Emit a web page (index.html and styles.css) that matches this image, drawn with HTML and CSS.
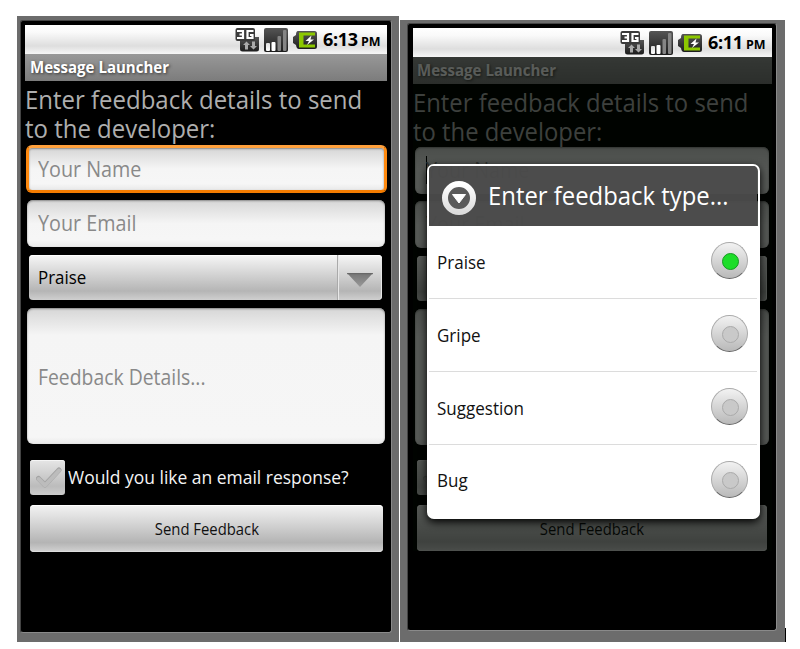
FILE: index.html
```html
<!DOCTYPE html>
<html lang="en">
<head>
<meta charset="utf-8">
<title>Message Launcher</title>
<link rel="stylesheet" href="styles.css">
</head>
<body>
<svg width="0" height="0" class="defs" aria-hidden="true">
  <defs>
    <linearGradient id="dark" x1="0" y1="0" x2="0" y2="1"><stop offset="0" stop-color="#555"/><stop offset="1" stop-color="#1c1c1c"/></linearGradient>
    <linearGradient id="bar" x1="0" y1="0" x2="0" y2="1"><stop offset="0" stop-color="#ddd"/><stop offset="1" stop-color="#fff"/></linearGradient>
    <linearGradient id="arrow" x1="0" y1="0" x2="0" y2="1"><stop offset="0" stop-color="#757575"/><stop offset="1" stop-color="#999"/></linearGradient>
    <linearGradient id="ring" x1="0" y1="0" x2="0" y2="1"><stop offset="0" stop-color="#fff"/><stop offset="1" stop-color="#dcdcdc"/></linearGradient>
    <symbol id="status-icons" viewBox="0 0 82 26">
      <path d="M5 10H24V22Q24 24.500 21.500 24.500H7.500Q5 24.500 5 22Z" fill="url(#dark)"/>
      <rect x=".5" y="1" width="19.500" height="13" rx="2" fill="#3b3b3b"/>
      <path d="M2 4H8V11H2M4.500 7.500H8M18.500 4H12.500V11H17.500V8H15" fill="none" stroke="#fff" stroke-width="2.200"/>
      <path d="M11.500 14.500L15 18H13V22.500H10V18H8ZM18.500 22.500L15 19H17V14.500H20V19H22Z" fill="#aaa"/>
      <rect x="29" y="1" width="24" height="24" rx="2" fill="url(#dark)"/>
      <rect x="31" y="16" width="4" height="8" rx="1" fill="url(#bar)"/>
      <rect x="36.500" y="15" width="4" height="9" rx="1" fill="#fff"/>
      <rect x="42.500" y="9" width="3.500" height="15" rx="1" fill="#858585"/>
      <rect x="48" y="3" width="3.500" height="21" rx="1" fill="#858585"/>
      <path d="M62 4H79.500Q82 4 82 6.500V19.500Q82 22 79.500 22H64Q61.500 22 61 18L58 16V10L61 8Q61 4 63 4Z" fill="url(#dark)"/>
      <path d="M64 5.500H80V8.500H68.500V17.500H80V20.500H64Z" fill="#8cc800"/>
      <path d="M76.500 8.500L70.500 14H74L72 18L79 12.500H75.500Z" fill="#fff"/>
    </symbol>
    <symbol id="check" viewBox="0 0 26 22">
      <path d="M2.500 11.500L9 18L23 3" fill="none" stroke="#a2a2a2" stroke-width="5" stroke-linecap="round" stroke-linejoin="round"/>
      <path d="M2.700 12L9 18.300L23 3.500" fill="none" stroke="#bcbcbc" stroke-width="4" stroke-linecap="round" stroke-linejoin="round"/>
    </symbol>
  </defs>
</svg>
<main class="board">
  <section class="phone phone-form">
    <div class="screen">
      <header class="status"><svg class="status-icons"><use href="#status-icons"/></svg><span class="clock">6:13</span><span class="pm">PM</span></header>
      <div class="titlebar"><span>Message Launcher</span></div>
      <div class="form">
        <div class="intro"><div>Enter feedback details to send</div><div>to the developer:</div></div>
        <div class="field name focused"><span>Your Name</span></div>
        <div class="field email"><span>Your Email</span></div>
        <div class="spinner"><span class="value">Praise</span><span class="drop"><svg viewBox="0 0 26 14"><path d="M0 0H26L13 14Z" fill="url(#arrow)"/><path d="M0 .7H26" stroke="#666"/></svg></span></div>
        <div class="field details"><span>Feedback Details...</span></div>
        <div class="option"><span class="checkbox"><svg><use href="#check"/></svg></span><span class="question">Would you like an email response?</span></div>
        <div class="button"><span>Send Feedback</span></div>
      </div>
    </div>
  </section>
  <section class="phone phone-dialog">
    <div class="screen">
      <header class="status"><svg class="status-icons"><use href="#status-icons"/></svg><span class="clock">6:11</span><span class="pm">PM</span></header>
      <div class="covered">
        <div class="titlebar"><span>Message Launcher</span></div>
        <div class="form">
          <div class="intro"><div>Enter feedback details to send</div><div>to the developer:</div></div>
          <div class="field name caret"><span>Your Name</span></div>
          <div class="field email"><span>Your Email</span></div>
          <div class="spinner"><span class="drop"></span></div>
          <div class="field details"></div>
          <div class="option"><span class="checkbox"><svg><use href="#check"/></svg></span></div>
          <div class="button"><span>Send Feedback</span></div>
        </div>
      </div>
      <div class="dialog">
        <div class="dialog-head">
          <svg class="head-icon" viewBox="0 0 36 36"><circle cx="18" cy="18" r="14" fill="#5a5a5a" stroke="url(#ring)" stroke-width="6"/><path d="M11.500 14.500H24.500L18 23Z" fill="#fff" stroke="#fff" stroke-linejoin="round"/></svg>
          <span class="dialog-title">Enter feedback type...</span>
        </div>
        <div class="choice"><span>Praise</span><i class="radio on"></i></div>
        <div class="choice"><span>Gripe</span><i class="radio"></i></div>
        <div class="choice"><span>Suggestion</span><i class="radio"></i></div>
        <div class="choice"><span>Bug</span><i class="radio"></i></div>
      </div>
    </div>
  </section>
  <i class="tick"></i>
</main>
</body>
</html>
```
FILE: styles.css
```css
* { box-sizing: border-box; }
body { margin: 0; background: #fff; font-family: "Open Sans", "Noto Sans", sans-serif; }
.defs { position: absolute; }
.board { display: flex; align-items: flex-end; width: 800px; height: 642px; padding-left: 17px; }
.phone { background: #6c6c6c; white-space: nowrap; }
.phone-form { width: 382px; height: 626px; padding: 4px 7px 9px 3px; }
.phone-dialog { width: 385px; height: 622px; margin-left: 1px; padding: 3px 8px 11px 7px; }
.tick { width: 1px; height: 14px; background: #000; }
.screen { position: relative; height: 100%; background: #000; border: 1px solid #444; border-right-color: #8a8a8a; border-bottom-color: #8a8a8a; border-radius: 3px; padding: 4px 4px 0 4px; }
.phone-dialog .screen { padding-left: 5px; }

/* Slightly condensed lettering throughout */
.titlebar span, .intro div, .field span, .value, .question, .button span, .dialog-title, .choice span { display: inline-block; transform: scaleX(.94); transform-origin: left center; }

.status { display: flex; align-items: center; justify-content: flex-end; height: 29px; padding-right: 7px; background: linear-gradient(#fff 0, #fafafa 25%, #dedede 72%, #f6f6f6 100%); color: #000; font-weight: 700; line-height: 28px; }
.status-icons { width: 82px; height: 26px; margin-right: 6px; }
.clock { font-size: 18px; width: 34px; letter-spacing: -.3px; margin-top: -1px; }
.pm { font-size: 12.500px; width: 19px; margin-left: 4px; padding-top: 4px; }
.titlebar { height: 27px; padding-left: 5px; background: linear-gradient(#989898, #7c7c7c); color: #fff; font-size: 16px; font-weight: 700; line-height: 26px; text-shadow: 1px 1px 3px #333; }

.intro { height: 64px; padding: 4px 0 0 0; color: #aeaeae; font-size: 25.500px; line-height: 28.500px; }
.intro div { display: block; transform: scaleX(.94); }
.field { border-radius: 6px; background: linear-gradient(#d6d6d6, #f5f5f5 50%, #f6f6f6 85%, #e9e9e9); box-shadow: inset 0 1px 2px #888; color: #898989; font-size: 21px; padding-left: 11px; margin: 0 2px; }
.name { height: 48px; line-height: 47px; }
.name.focused { border: 3px solid #ff8a10; border-top-color: #ffa03c; border-bottom-color: #f57c00; margin: 0 0 0 1px; padding-left: 9px; line-height: 42px; }
.email { height: 47px; line-height: 46px; margin-top: 7px; }
.spinner { display: flex; justify-content: space-between; height: 45px; margin: 8px 5px 0 4px; border-radius: 4px; background: linear-gradient(#f6f6f6, #dedede 30%, #b5b5b5 80%, #cfcfcf); box-shadow: inset 0 1px #fff, inset -1px 0 #e5e5e5; color: #000; font-size: 18px; line-height: 45px; padding-left: 9px; }
.drop { width: 45px; border-left: 1px solid #aaa; box-shadow: inset 1px 0 #e8e8e8; padding: 18px 0 0 9px; }
.drop svg { display: block; width: 26px; height: 14px; }
.details { display: flex; align-items: center; height: 136px; margin-top: 8px; padding-top: 2px; background: linear-gradient(#d6d6d6, #f5f5f5 20%, #f6f6f6 95%, #e9e9e9); }
.details span { transform: scaleX(.922); }
.option { display: flex; align-items: center; height: 35px; margin: 16px 0 0 5px; color: #f4f4f4; font-size: 18.500px; line-height: 33px; }
.checkbox { display: flex; align-items: center; justify-content: center; width: 35px; height: 35px; margin-right: 3px; border-radius: 3px; background: linear-gradient(#e6e6e6, #bcbcbc 75%, #ccc); box-shadow: inset 0 1px #f5f5f5; }
.checkbox svg { width: 26px; height: 22px; margin-left: 2px; }
.question { margin-top: -2px; transform: scaleX(.944); }
.button { height: 47px; margin: 10px 4px 0 5px; border-radius: 4px; background: linear-gradient(#f3f3f3, #d8d8d8 35%, #b4b4b4 80%, #d2d2d2); box-shadow: inset 0 1px #fff, inset 0 -1px #ddd; color: #111; font-size: 16.500px; line-height: 48px; text-align: center; }
.button span { transform: scaleX(.9); transform-origin: center; }

.covered { position: relative; }
.covered::after { content: ""; position: absolute; inset: 0; background: rgba(0, 4, 0, .65); }
.phone-dialog .titlebar { padding-left: 4px; }
.phone-dialog .intro { height: 63px; }
.phone-dialog .intro div { transform: scaleX(.935); }
.phone-dialog .field { margin-right: 3px; }
.phone-dialog .name { height: 47px; }
.caret { position: relative; }
.caret::before { content: ""; position: absolute; left: 11px; top: 9px; width: 1px; height: 28px; background: #000; }
.phone-dialog .option { margin: 15px 0 0 4px; }
.phone-dialog .button { height: 46px; line-height: 47px; margin: 10px 5px 0 4px; }

.dialog { position: absolute; left: 19px; top: 140px; width: 333px; height: 355px; border: 2px solid #fff; border-radius: 7px; background: linear-gradient(transparent 60px, #fff 60px); box-shadow: 0 3px 8px #000; padding-right: 1px; }
.dialog-head { display: flex; align-items: center; height: 60px; padding-left: 12px; background: rgba(76, 76, 76, .95); color: #fff; font-size: 26px; border-radius: 4px 4px 0 0; }
.head-icon { width: 36px; height: 36px; margin: 4px 11px 0 0; }
.dialog-title { transform: scaleX(.918); margin-top: -2px; }
.choice { display: flex; align-items: center; justify-content: space-between; height: 73px; padding: 0 9px 0 8px; border-bottom: 1px solid #dcdcdc; color: #111; font-size: 18.500px; }
.choice span { transform: scaleX(.92); margin-top: -2px; }
.choice:last-child { height: 71px; border: 0; }
.radio { position: relative; width: 37px; height: 37px; margin-top: -3px; border: 1px solid #aaa; border-bottom-color: #666; border-radius: 50%; background: linear-gradient(#f2f2f2, #b9b9b9); }
.radio::after { content: ""; position: absolute; left: 10px; top: 10px; width: 15px; height: 15px; border: 1px solid #aaa; border-radius: 50%; background: #c9c9c9; }
.radio.on::after { border-color: #169a20; background: #1ddd29; }
```
